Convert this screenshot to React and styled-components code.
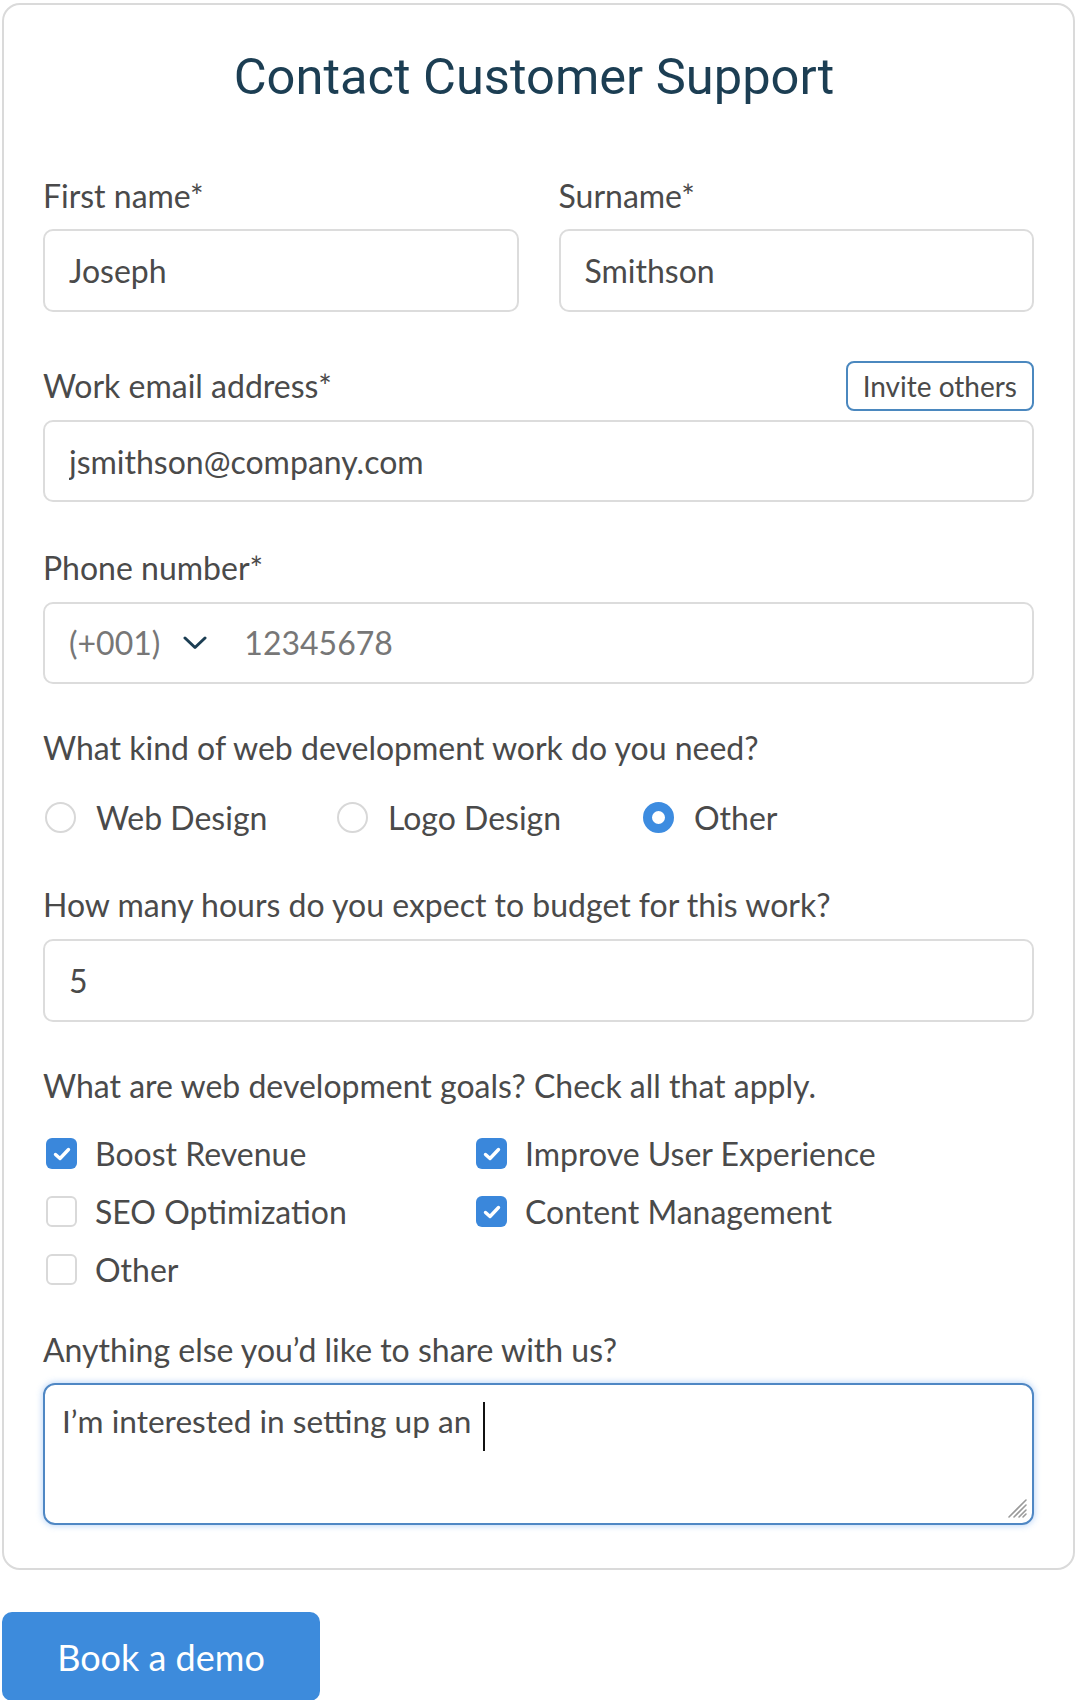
import React from 'react'
import styled, { createGlobalStyle } from 'styled-components'

const GlobalStyle = createGlobalStyle`
  body {
    margin: 0;
    background: #ffffff;
    font-family: Lato, "Liberation Sans", sans-serif;
    color: #4a4a4a;
  }
  * { box-sizing: border-box; }
`

const Page = styled.div`
  padding: 3px 2px 0 2px;
`

const Card = styled.form`
  border: 2px solid #dadada;
  border-radius: 18px;
  padding: 43px 39px 43px 39px;
  display: flex;
  flex-direction: column;
`

const Title = styled.h1`
  margin: 0;
  padding-right: 9px;
  font-family: Roboto, "Liberation Sans", sans-serif;
  font-weight: 400;
  font-size: 50.6px;
  line-height: 58px;
  color: #1c3e53;
  text-align: center;
`

const Field = styled.div`
  display: flex;
  flex-direction: column;
  margin-top: ${props => props.$top ?? 45}px;
`

const Label = styled.label`
  font-size: 32px;
  line-height: 1.2;
  color: #4a4a4a;
  margin-bottom: ${props => props.$gap ?? 14}px;
`

const LabelRow = styled.div`
  display: flex;
  justify-content: space-between;
  align-items: center;
  height: 50px;
  margin-bottom: 9px;

  ${Label} { margin-bottom: 0; }
`

const InviteButton = styled.button`
  height: 50px;
  padding: 0 15px;
  border: 2px solid #4b88bf;
  border-radius: 8px;
  background: #ffffff;
  font-family: Lato, "Liberation Sans", sans-serif;
  font-size: 28px;
  color: #4a4a4a;
`

const Columns = styled.div`
  display: grid;
  grid-template-columns: 1fr 1fr;
  column-gap: 40px;
  margin-top: 71px;
`

const Input = styled.input`
  width: 100%;
  height: ${props => props.$h || 82}px;
  padding: 0 24px;
  border: 2px solid #dcdcdc;
  border-radius: 10px;
  background: #ffffff;
  font-family: Lato, "Liberation Sans", sans-serif;
  font-size: 32px;
  color: #4a4a4a;
  outline: none;
`

const PhoneBox = styled.div`
  height: 82px;
  padding: 0 24px;
  border: 2px solid #dcdcdc;
  border-radius: 10px;
  display: flex;
  align-items: center;
  font-size: 32px;
  color: #777777;
`

const Code = styled.span`
  margin-right: 23px;
`

const Chevron = styled.svg`
  width: 24px;
  height: 14px;
  margin-right: 37px;
`

const RadioRow = styled.div`
  display: grid;
  grid-template-columns: 292px 306px 1fr;
  height: 40px;
  align-items: center;
  padding-left: 2px;
  margin-top: 30px;
`

const Option = styled.div`
  display: flex;
  align-items: center;
  font-size: 32px;
  color: #4a4a4a;
`

const Radio = styled.span`
  width: 31px;
  height: 31px;
  border-radius: 50%;
  flex-shrink: 0;
  margin-right: 20px;
  border: ${props => (props.$on ? '9.5px solid #3d8ce0' : '2px solid #d8d8d8')};
  background: #ffffff;
`

const CheckGrid = styled.div`
  display: grid;
  grid-template-columns: 430px 1fr;
  row-gap: 22px;
  padding-left: 3px;
  margin-top: 31px;
`

const CheckItem = styled(Option)`
  height: 36px;
`

const Box = styled.span`
  width: 31px;
  height: 31px;
  border-radius: 6px;
  flex-shrink: 0;
  margin-right: 18px;
  display: flex;
  align-items: center;
  justify-content: center;
  background: ${props => (props.$on ? '#3a87db' : '#ffffff')};
  border: ${props => (props.$on ? 'none' : '2px solid #d9d9d9')};
`

const TextBox = styled.div`
  position: relative;
  height: 142px;
  padding: 17px 17px;
  border: 2px solid #4f87c4;
  border-radius: 12px;
  box-shadow: 0 0 7px rgba(70, 145, 235, 0.45);
  font-size: 31.6px;
  line-height: 38px;
  color: #4a4a4a;
`

const Caret = styled.span`
  display: inline-block;
  width: 2px;
  height: 49px;
  margin-left: 12px;
  vertical-align: top;
  background: #111111;
`

const Grip = styled.svg`
  position: absolute;
  right: 4px;
  bottom: 4px;
  width: 22px;
  height: 22px;
`

const DemoButton = styled.button`
  margin-top: 42px;
  width: 318px;
  height: 89px;
  border: none;
  border-radius: 10px;
  background: #3d8bdc;
  color: #ffffff;
  font-family: Lato, "Liberation Sans", sans-serif;
  font-size: 36px;
`

const Check = () => (
  <svg width="18" height="14" viewBox="0 0 18 14">
    <path d="M2.5 7.5 L7 11.5 L15.5 2.5" fill="none" stroke="#ffffff" strokeWidth="3.4" strokeLinecap="round" strokeLinejoin="round" />
  </svg>
)

const goals = [
  { label: 'Boost Revenue', on: true },
  { label: 'Improve User Experience', on: true },
  { label: 'SEO Optimization', on: false },
  { label: 'Content Management', on: true },
  { label: 'Other', on: false },
]

const App = () => {
  return (
    <Page>
      <GlobalStyle />
      <Card onSubmit={e => e.preventDefault()}>
        <Title>Contact Customer Support</Title>

        <Columns>
          <Field $top={0}>
            <Label>First name*</Label>
            <Input defaultValue="Joseph" $h={83} />
          </Field>
          <Field $top={0}>
            <Label>Surname*</Label>
            <Input defaultValue="Smithson" $h={83} />
          </Field>
        </Columns>

        <Field $top={49}>
          <LabelRow>
            <Label>Work email address*</Label>
            <InviteButton type="button">Invite others</InviteButton>
          </LabelRow>
          <Input defaultValue="jsmithson@company.com" />
        </Field>

        <Field $top={47}>
          <Label>Phone number*</Label>
          <PhoneBox>
            <Code>(+001)</Code>
            <Chevron viewBox="0 0 24 14">
              <path d="M2 2 L12 11.5 L22 2" fill="none" stroke="#1c3e53" strokeWidth="3" strokeLinecap="round" strokeLinejoin="round" />
            </Chevron>
            <span>12345678</span>
          </PhoneBox>
        </Field>

        <Field $top={45}>
          <Label $gap={0}>What kind of web development work do you need?</Label>
          <RadioRow>
            <Option><Radio />Web Design</Option>
            <Option><Radio />Logo Design</Option>
            <Option><Radio $on />Other</Option>
          </RadioRow>
        </Field>

        <Field $top={49}>
          <Label>How many hours do you expect to budget for this work?</Label>
          <Input defaultValue="5" $h={83} />
        </Field>

        <Field $top={45}>
          <Label $gap={0}>What are web development goals? Check all that apply.</Label>
          <CheckGrid>
            {goals.map(g => (
              <CheckItem key={g.label}>
                <Box $on={g.on}>{g.on && <Check />}</Box>
                {g.label}
              </CheckItem>
            ))}
          </CheckGrid>
        </Field>

        <Field $top={43}>
          <Label>Anything else you’d like to share with us?</Label>
          <TextBox>
            I’m interested in setting up an<Caret />
            <Grip viewBox="0 0 22 22">
              <g stroke="#9a9a9a" strokeWidth="1.6" strokeLinecap="round">
                <line x1="3" y1="20" x2="20" y2="3" />
                <line x1="8" y1="20" x2="20" y2="8" />
                <line x1="13" y1="20" x2="20" y2="13" />
                <line x1="17" y1="20" x2="20" y2="17" />
              </g>
            </Grip>
          </TextBox>
        </Field>
      </Card>
      <DemoButton type="button">Book a demo</DemoButton>
    </Page>
  )
}

export default App
